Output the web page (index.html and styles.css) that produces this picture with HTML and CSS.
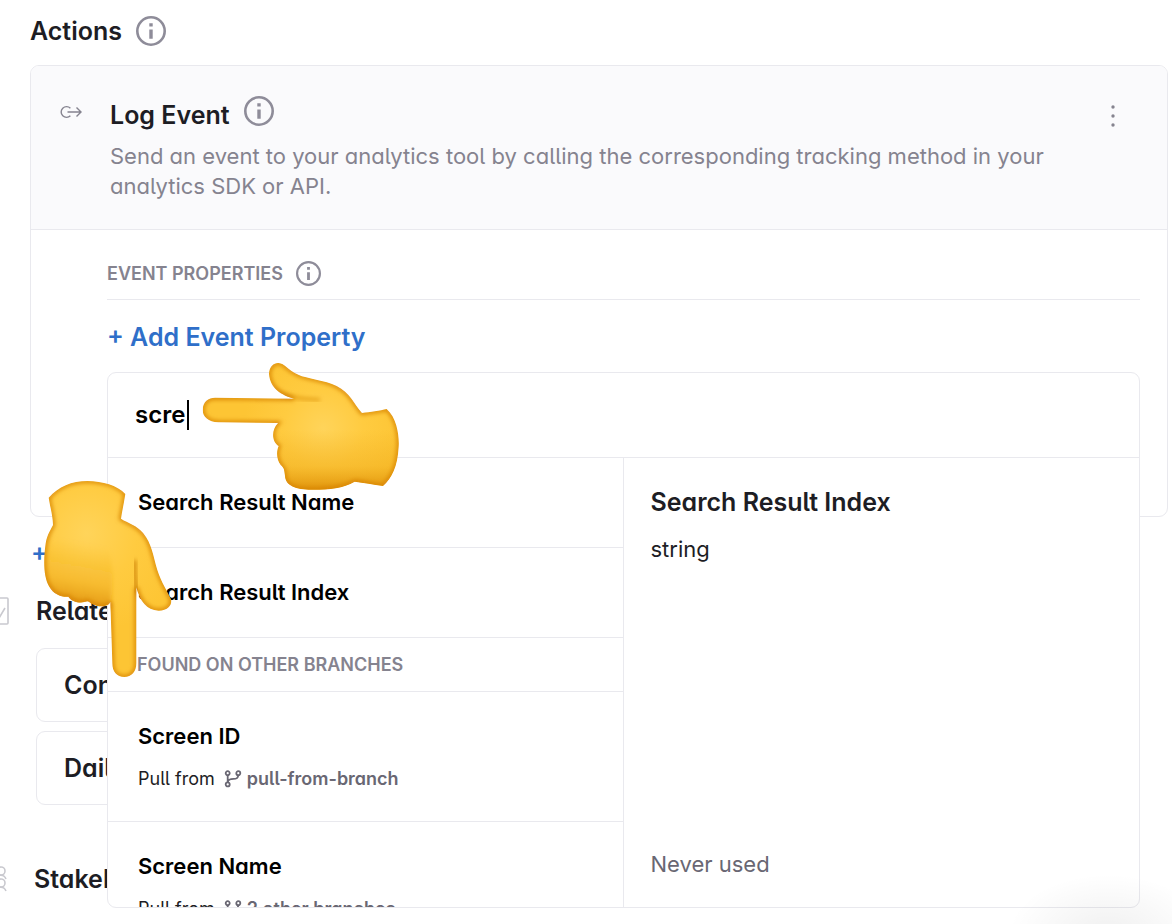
FILE: index.html
```html
<!DOCTYPE html>
<html lang="en">
<head>
<meta charset="utf-8">
<title>Actions</title>
<link rel="stylesheet" href="styles.css">
</head>
<body>
<svg class="defs" aria-hidden="true">
  <symbol id="info" viewBox="0 0 30 30"><circle cx="15" cy="15" r="13.7" fill="none" stroke="currentColor" stroke-width="2.6"/><path d="M13.3 7.3h3.4v3.2h-3.4zM13.3 13.4h3.4v9.4h-3.4z" fill="currentColor"/></symbol>
  <symbol id="branch" viewBox="0 0 18 18"><g fill="none" stroke="currentColor" stroke-width="1.8"><circle cx="3.7" cy="3.2" r="2"/><circle cx="3.7" cy="14.4" r="2"/><circle cx="14.3" cy="3.2" r="2"/><path d="M3.7 5.2v7.2M14.3 5.2C14 8.400 12.500 8.900 9.500 8.900C6.500 8.900 4.300 9.500 3.800 12"/></g></symbol>
</svg>
<main class="page">
  <section>
    <div class="section-head"><h1 class="title">Actions</h1><button class="info-btn" aria-label="About actions"><svg class="info"><use href="#info"/></svg></button></div>
    <article class="card">
      <header class="card-head">
        <svg class="event-icon" viewBox="0 0 22 14" fill="none" stroke="currentColor" stroke-width="1.4"><path d="M10.400 3.200A5.400 5.400 0 1 0 10.400 10.800M7.500 7H21M16.500 2.500L21 7l-4.500 4.500"/></svg>
        <div class="card-text">
          <div class="name-row"><h2 class="title">Log Event</h2><button class="info-btn" aria-label="About log event"><svg class="info"><use href="#info"/></svg></button></div>
          <p class="description">Send an event to your analytics tool by calling the corresponding tracking method in your analytics SDK or API.</p>
        </div>
        <button class="more" aria-label="More"><svg class="more-icon" viewBox="0 0 4 22" fill="currentColor"><circle cx="2" cy="2" r="1.700"/><circle cx="2" cy="11" r="1.700"/><circle cx="2" cy="20" r="1.700"/></svg></button>
      </header>
      <div class="card-body">
        <div class="props-head"><h3 class="caption">EVENT PROPERTIES</h3><button class="info-btn" aria-label="About event properties"><svg class="info info-small"><use href="#info"/></svg></button></div>
        <button class="add">+ Add Event Property</button>
        <div class="picker-anchor">
          <div class="picker">
            <div class="search"><input class="search-input" aria-label="Search properties" value="scre"><span class="caret"></span></div>
            <div class="results">
              <ul class="list">
                <li class="item"><h4 class="item-name">Search Result Name</h4></li>
                <li class="item"><h4 class="item-name">Search Result Index</h4></li>
                <li class="group caption">FOUND ON OTHER BRANCHES</li>
                <li class="item"><h4 class="item-name">Screen ID</h4><p class="pull">Pull from <svg class="branch"><use href="#branch"/></svg><b class="branch-name">pull-from-branch</b></p></li>
                <li class="item"><h4 class="item-name">Screen Name</h4><p class="pull">Pull from <svg class="branch"><use href="#branch"/></svg><b class="branch-name">2 other branches</b></p></li>
              </ul>
              <aside class="detail"><h4 class="title">Search Result Index</h4><p class="type">string</p><p class="usage">Never used</p></aside>
            </div>
          </div>
        </div>
      </div>
    </article>
    <button class="add add-action" aria-label="Add action">+</button>
  </section>
  <section class="related">
    <div class="side-head"><svg class="side-icon" viewBox="0 0 28 28" fill="none" stroke="currentColor" stroke-width="1.600"><rect x="1" y="1" width="26" height="26" rx="1"/><path d="M14 18l4 3 6-10"/></svg><h2 class="title">Related</h2></div>
    <div class="metric title">Con</div>
    <div class="metric title">Daily</div>
  </section>
  <section class="stakeholders">
    <div class="side-head"><svg class="side-icon" viewBox="0 0 28 28" fill="none" stroke="currentColor" stroke-width="1.600"><circle cx="22" cy="6" r="4"/><circle cx="22" cy="18" r="4"/><path d="M16 14c3-5 9-5 11 0M16 26c3-5 9-5 11 0"/></svg><h2 class="title">Stakeh</h2></div>
  </section>
  <svg class="hand hand-left" viewBox="0 0 660 450" aria-hidden="true">
    <defs>
      <radialGradient id="skin1" gradientUnits="userSpaceOnUse" cx="400" cy="235" r="240"><stop offset="0" stop-color="#ffd45a"/><stop offset=".5" stop-color="#ffcb40"/><stop offset="1" stop-color="#fdc534"/></radialGradient>
      <linearGradient id="shade1" gradientUnits="userSpaceOnUse" x1="400" y1="240" x2="400" y2="420"><stop offset="0" stop-color="#eba516" stop-opacity="0"/><stop offset=".6" stop-color="#eba516" stop-opacity=".35"/><stop offset="1" stop-color="#dc8d06" stop-opacity=".9"/></linearGradient>
      <filter id="soft" x="-20%" y="-20%" width="140%" height="140%"><feGaussianBlur stdDeviation="6"/></filter>
      <path id="hand1" d="M75 143L312 146C275 136 240 115 237 72C238 48 252 38 266 39C285 41 290 58 325 74C350 86 405 90 440 108C480 128 492 162 516 189C540 186 570 182 590 177C622 205 628 260 626 290C623 350 605 385 579 408C550 404 520 398 494 395C460 415 420 419 370 419C320 420 286 408 285 378C282 355 282 355 272 345C260 330 258 305 266 288C245 275 243 240 264 219L85 217C55 216 38 200 38 180C38 155 55 143 75 143Z"/>
      <clipPath id="clip1"><use href="#hand1"/></clipPath>
    </defs>
    <g clip-path="url(#clip1)"><use href="#hand1" fill="url(#skin1)"/><use href="#hand1" fill="url(#shade1)"/><use href="#hand1" fill="none" stroke="#d88408" stroke-width="11" filter="url(#soft)"/><path d="M245 114C280 142 340 148 390 149" fill="none" stroke="#d98a0b" stroke-width="6" filter="url(#soft)"/><path d="M70 216H262" fill="none" stroke="#d07a08" stroke-width="10" filter="url(#soft)"/></g>
  </svg>
  <svg class="hand hand-down" viewBox="0 0 600 660" aria-hidden="true">
    <defs>
      <radialGradient id="skin2" gradientUnits="userSpaceOnUse" cx="260" cy="190" r="300"><stop offset="0" stop-color="#ffd45a"/><stop offset=".5" stop-color="#ffcb40"/><stop offset="1" stop-color="#fdc534"/></radialGradient>
      <linearGradient id="shade2" gradientUnits="userSpaceOnUse" x1="255" y1="220" x2="220" y2="405"><stop offset="0" stop-color="#eba516" stop-opacity="0"/><stop offset=".6" stop-color="#eba516" stop-opacity=".4"/><stop offset="1" stop-color="#dc8d06" stop-opacity=".9"/></linearGradient>
      <path id="hand2" d="M146 83C175 50 215 33 262 33C310 34 350 45 376 72C372 100 366 125 363 146C385 160 410 165 430 190C455 220 460 260 472 300C485 340 502 362 514 390C515 410 500 423 475 422C440 420 420 395 409 352V580C409 605 395 621 373 621C350 621 337 605 337 580L331 396C325 410 300 412 283 405C270 400 270 396 262 394C240 402 215 395 205 380C185 382 160 372 148 350C130 320 130 270 137 220C142 190 155 175 159 165C158 135 150 110 146 83Z"/>
      <clipPath id="clip2"><use href="#hand2"/></clipPath>
    </defs>
    <g clip-path="url(#clip2)"><use href="#hand2" fill="url(#skin2)"/><path d="M120 180H300C345 240 340 330 331 420H120z" fill="url(#shade2)" filter="url(#soft)"/><use href="#hand2" fill="none" stroke="#d88408" stroke-width="11" filter="url(#soft)"/><path d="M404 270C402 300 405 330 410 370" fill="none" stroke="#c97a08" stroke-width="9" filter="url(#soft)"/></g>
  </svg>
  <div class="glow"></div>
</main>
</body>
</html>
```
FILE: styles.css
```css
* { box-sizing: border-box; }
body { margin: 0; background: #fff; color: #1d1d24; font-family: Inter, "Liberation Sans", sans-serif; font-feature-settings: "cv11", "cv05"; }
h1, h2, h3, h4, p, ul { margin: 0; padding: 0; }
button { border: 0; padding: 0; background: none; font: inherit; font-feature-settings: inherit; color: inherit; }
.defs { position: absolute; width: 0; height: 0; }
.page { position: relative; height: 100vh; overflow: hidden; padding: 15px 4px 0 30px; }
.title { font-size: 25px; line-height: 32px; font-weight: 600; }
.section-head { display: flex; align-items: center; gap: 14px; height: 32px; }
.info-btn { display: flex; color: #8e8c99; }
.info { width: 30px; height: 30px; }
.info-small { width: 25px; height: 25px; }
.card { margin-top: 18px; border: 1px solid #e9e9ee; border-radius: 9px; min-height: 452px; }
.card-head { display: flex; align-items: flex-start; padding: 30px 52px 28px 29px; background: #fafafc; border-bottom: 1px solid #e9e9ee; border-radius: 8px 8px 0 0; }
.event-icon { flex: none; width: 22px; height: 14px; margin: 9px 28px 0 0; color: #85838f; }
.card-text { flex: 1; }
.name-row { display: flex; align-items: flex-start; gap: 14px; }
.name-row .title { padding-top: 3px; }
.description { margin-top: 10px; max-width: 940px; font-size: 22px; line-height: 30px; color: #85838f; }
.more { margin: 9px 0 0 auto; color: #85838f; }
.more-icon { display: block; width: 4px; height: 22px; }
.card-body { padding: 31px 27px 0 76px; }
.props-head { display: flex; align-items: center; gap: 13px; padding-bottom: 13px; border-bottom: 1px solid #e9e9ee; }
.caption { font-size: 18px; line-height: 24px; font-weight: 600; color: #85838f; }
.add { display: block; margin-top: 21px; font-size: 25px; line-height: 32px; font-weight: 600; color: #2f6fc9; }
.picker-anchor { position: relative; margin-top: 19px; }
.picker { position: absolute; top: 0; left: 0; right: 0; z-index: 1; background: #fff; border: 1px solid #e9e9ee; border-radius: 9px; overflow: hidden; }
.search { display: flex; align-items: center; padding: 27px; border-bottom: 1px solid #e9e9ee; }
.search-input { width: 52px; height: 30px; border: 0; padding: 0; outline: 0; background: none; color: #000; font: 600 24px/30px Inter, "Liberation Sans", sans-serif; }
.caret { width: 2px; height: 30px; background: #000; }
.results { display: grid; grid-template-columns: 1fr 1fr; height: 449px; }
.list { list-style: none; border-right: 1px solid #e9e9ee; overflow: hidden; }
.item { padding: 29px 30px 30px; border-bottom: 1px solid #e9e9ee; color: #000; }
.item-name { font-size: 22px; line-height: 30px; font-weight: 600; }
.group { padding: 15px 29px 14px; border-bottom: 1px solid #e9e9ee; }
.pull { display: flex; align-items: center; margin-top: 15px; font-size: 18px; line-height: 25px; color: #1d1d24; }
.branch { width: 18px; height: 18px; margin: 0 5px 0 9px; color: #696773; }
.branch-name { font-weight: 600; color: #696773; }
.detail { display: flex; flex-direction: column; padding: 28px 27px; }
.type { margin-top: 16px; font-size: 22px; line-height: 30px; }
.usage { margin-top: auto; font-size: 22px; line-height: 30px; color: #696773; }
.add-action { margin: 19px 0 0 1px; }
.related { margin-top: 27px; padding: 0 40px 0 6px; }
.side-head { display: flex; align-items: center; }
.side-icon { flex: none; width: 28px; height: 28px; margin-left: -55px; margin-right: 27px; color: #c9c9cf; }
.metric { margin-top: 9px; padding: 20px 27px; border: 1px solid #e9e9ee; border-radius: 9px; }
.side-head + .metric { margin-top: 21px; }
.stakeholders { margin-top: 58px; padding-left: 4px; }
.hand { position: absolute; z-index: 2; pointer-events: none; }
.hand-left { left: 190px; top: 350px; width: 220px; height: 150px; }
.hand-down { left: 0; top: 470px; width: 200px; height: 220px; }
.glow { position: absolute; z-index: 3; right: -36px; bottom: -70px; width: 200px; height: 120px; background: radial-gradient(closest-side, rgba(0, 0, 0, .06), rgba(0, 0, 0, 0)); pointer-events: none; }
```
